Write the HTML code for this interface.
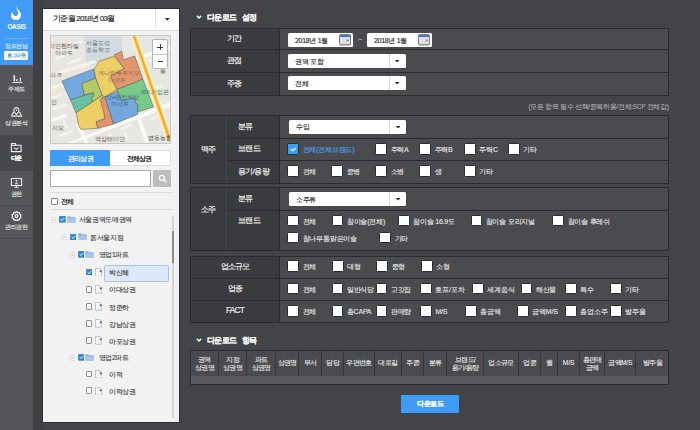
<!DOCTYPE html>
<html><head><meta charset="utf-8">
<style>
*{box-sizing:border-box;margin:0;padding:0}
html,body{width:700px;height:430px;overflow:hidden;background:#434448;font-family:"Liberation Sans",sans-serif}
.a{position:absolute}
.t{position:absolute;white-space:nowrap}
</style></head><body>
<div class="a" style="left:0px;top:0px;width:33px;height:430px;background:#55565a;"></div>
<div class="a" style="left:0px;top:0px;width:33px;height:65.4px;background:#429bf6;"></div>
<div class="a" style="left:33px;top:0px;width:10px;height:430px;background:#404145;"></div>
<svg class="a" style="left:11px;top:6px" width="10" height="14" viewBox="0 0 10 14"><path fill="#fff" d="M5.4 0 C5.6 3 10 5 10 9 C10 12 7.8 14 5 14 C2.2 14 0 12 0 9.5 C0 8 0.7 7 1.5 6.3 C1.8 9 3.5 10.5 5.3 10 C7.2 9.4 7.6 7.3 6.7 5.2 C6 3.7 5.2 2 5.4 0 Z"/></svg>
<div class="t" style="left:0px;top:24px;font-size:6.4px;line-height:6.4px;color:#fff;width:33px;text-align:center;letter-spacing:-0.35px;font-weight:bold">OASIS</div>
<div class="a" style="left:4.6px;top:37.8px;width:23.4px;height:0.9px;background:#74a8dc;"></div>
<div class="t" style="left:0px;top:42.6px;font-size:6.2px;line-height:6.2px;color:#dcedfd;width:33px;text-align:center;letter-spacing:-0.4px;-webkit-text-stroke:0.15px #dcedfd">정도전님</div>
<div class="a" style="left:4.2px;top:50.8px;width:24.3px;height:9px;background:#fff;border-radius:1.5px"></div>
<div class="t" style="left:4.2px;top:52.8px;font-size:5.2px;line-height:5.2px;color:#3a8de0;width:24.3px;text-align:center;letter-spacing:-0.3px;-webkit-text-stroke:0.15px #3a8de0">로그아웃</div>
<div class="a" style="left:0px;top:135.6px;width:33px;height:34.2px;background:#47484c;"></div>
<div class="a" style="left:0px;top:100.4px;width:33px;height:0.8px;background:#4b4c50;"></div>
<div class="a" style="left:0px;top:135.3px;width:33px;height:0.8px;background:#4b4c50;"></div>
<div class="a" style="left:0px;top:169.6px;width:33px;height:0.8px;background:#4b4c50;"></div>
<div class="a" style="left:0px;top:204.6px;width:33px;height:0.8px;background:#4b4c50;"></div>
<div class="a" style="left:0px;top:238.3px;width:33px;height:0.8px;background:#4b4c50;"></div>
<svg class="a" style="left:11.5px;top:75px" width="11" height="8" viewBox="0 0 11 8"><g fill="#eee"><rect x="1.5" y="0.3" width="1.6" height="5.9"/><rect x="4.2" y="4.1" width="1.3" height="2.1"/><rect x="7.7" y="2.8" width="1.3" height="3.4"/><rect x="0.4" y="7" width="10" height="0.9"/></g></svg>
<div class="t" style="left:0px;top:86.3px;font-size:6.2px;line-height:6.2px;color:#e4e4e4;width:33px;text-align:center;letter-spacing:-0.3px;-webkit-text-stroke:0.15px #e4e4e4">주제도</div>
<svg class="a" style="left:6px;top:103px" width="21" height="17" viewBox="0 0 21 17"><g fill="none" stroke="#e6e6e6" stroke-width="1.1" stroke-linejoin="round"><path d="M10.4 11.6 C8.6 9.6 7.8 8.5 7.8 7.2 A2.6 2.6 0 1 1 13 7.2 C13 8.5 12.2 9.6 10.4 11.6 Z"/><path d="M8.2 9.4 L7.3 9.4 L5.6 13.1 L15.6 13.1 L13.8 9.4 L12.7 9.4"/></g><circle cx="10.4" cy="7.1" r="0.8" fill="#e6e6e6"/></svg>
<div class="t" style="left:0px;top:120.3px;font-size:6.2px;line-height:6.2px;color:#e4e4e4;width:33px;text-align:center;letter-spacing:-0.4px;-webkit-text-stroke:0.15px #e4e4e4">상권분석</div>
<svg class="a" style="left:10px;top:142px" width="13" height="11" viewBox="0 0 13 11"><g fill="none" stroke="#f0f0f0" stroke-width="1.1" stroke-linejoin="round"><path d="M1.4 1.5 L5.4 1.5 L6.1 3.3 L11.1 3.3 L11.1 9.6 L1.4 9.6 Z"/><path d="M1.4 3.3 L6.1 3.3"/><path d="M4 5.6 L6.3 7.4 L8.6 5.6"/></g></svg>
<div class="t" style="left:0px;top:155px;font-size:6.4px;line-height:6.4px;color:#fff;width:33px;text-align:center;letter-spacing:-0.2px;font-weight:bold;-webkit-text-stroke:0.15px #fff">다운</div>
<svg class="a" style="left:10px;top:177px" width="13" height="11" viewBox="0 0 13 11"><g fill="none" stroke="#e6e6e6" stroke-width="1.1"><rect x="1.4" y="1.5" width="10.2" height="7"/><path d="M4.6 10.3 L8.4 10.3 M6.5 8.5 L6.5 10.3"/></g><g fill="#e6e6e6"><circle cx="6.5" cy="3.9" r="0.9"/><path d="M4.9 7.3 C5.1 5.3 7.9 5.3 8.1 7.3 Z"/></g></svg>
<div class="t" style="left:0px;top:190.8px;font-size:6.2px;line-height:6.2px;color:#e4e4e4;width:33px;text-align:center;letter-spacing:-0.3px;-webkit-text-stroke:0.15px #e4e4e4">권한</div>
<svg class="a" style="left:11px;top:211px" width="11" height="10" viewBox="0 0 11 10"><g fill="none" stroke="#e8e8e8" stroke-width="1.3" stroke-linejoin="round"><path d="M5.5 0.6 L6.6 1.6 L8.2 1.4 L8.6 3 L10 3.9 L9.4 5.3 L10 6.7 L8.6 7.5 L8.2 9 L6.6 8.8 L5.5 9.6 L4.4 8.8 L2.8 9 L2.4 7.5 L1 6.7 L1.6 5.3 L1 3.9 L2.4 3 L2.8 1.4 L4.4 1.6 Z"/><circle cx="5.5" cy="5.1" r="1.4"/></g></svg>
<div class="t" style="left:0px;top:223.8px;font-size:6.2px;line-height:6.2px;color:#e4e4e4;width:33px;text-align:center;letter-spacing:-0.4px;-webkit-text-stroke:0.15px #e4e4e4">관리권한</div>
<div class="a" style="left:42px;top:8px;width:138px;height:415px;background:#2e2f32;"></div>
<div class="a" style="left:43px;top:9px;width:136px;height:413px;background:#f2f2f2;"></div>
<div class="a" style="left:43px;top:9px;width:136px;height:21px;background:#ffffff;"></div>
<div class="a" style="left:43px;top:30px;width:136px;height:1px;background:#dadada;"></div>
<div class="a" style="left:154.6px;top:9px;width:1px;height:21px;background:#e4e4e4;"></div>
<div class="t" style="left:53px;top:15.3px;font-size:8px;line-height:8px;color:#333;letter-spacing:-0.75px;-webkit-text-stroke:0.2px #333">기준월 2018년 03월</div>
<svg class="a" style="left:165.1px;top:18.4px" width="4.6" height="2.8" viewBox="0 0 4.6 2.8"><path d="M0 0 L4.6 0 L2.3 2.8 Z" fill="#222"/></svg>
<div class="a" style="left:50px;top:35px;width:121px;height:109px;background:#e8e5de;border:1px solid #c9c9c9;overflow:hidden">
<svg class="a" style="left:-1px;top:-1px" width="121" height="109" viewBox="50 35 121 109">
<rect x="40" y="30" width="140" height="120" fill="#e8e6e0"/>
<g fill="#f4f3ef">
<path d="M51 97 L62 93 L63 95.5 L52 99.5 Z"/><path d="M52 108 L66 103 L67 105.5 L53 110.5 Z"/>
<path d="M58 135 L72 130 L73 132.5 L59 137.5 Z"/><path d="M64 118 L68 128 L66 129 L62 119 Z"/>
<path d="M54 58 L70 52 L71 54.5 L55 60.5 Z"/><path d="M66 63 L80 58 L81 60 L67 65 Z"/>
<path d="M72 44 L82 40 L83 42.5 L73 46.5 Z"/><path d="M120 128 L132 123 L133 125.5 L121 130.5 Z"/>
<path d="M110 132 L113 139 L111 140 L108 133 Z"/><path d="M125 131 L129 140 L127 141 L123 132 Z"/>
<path d="M150 118 L160 114 L161 116.5 L151 120.5 Z"/><path d="M148 60 L160 55 L161 57.5 L149 62.5 Z"/>
<path d="M152 88 L162 84 L163 86.5 L153 90.5 Z"/>
</g>

<path d="M84 33 L122 33 L122 56 L99 61.5 L92 66 L86 62 Z" fill="#d3dbe2"/>
<path d="M48 88 L170 45 L170 49 L48 92 Z" fill="#fbfaf6"/>
<path d="M48 90 L62 85 L63 88 L48 93 Z" fill="#f4eebd"/><path d="M50 74 L95 60 L96 63 L51 77 Z" fill="#f6f4ee"/>
<path d="M60 146 L175 100 L175 105 L66 146 Z" fill="#fbfaf6"/>
<path d="M48 120 L66 114 L67 117 L48 123 Z" fill="#fbfaf6"/>
<path d="M138 108 L150 146 L146 146 L134 109 Z" fill="#fbfaf6"/>
<path d="M80 124 L90 146 L86 146 L76 124 Z" fill="#fbfaf6"/>
<path d="M129.5 33 L136.5 33 L173 138 L166.5 141 Z" fill="#fbf3cf"/><path d="M130.8 33 L135.2 33 L171.6 138.5 L167.8 140 Z" fill="#f7d26a"/>
<path d="M132.3 33 L133.8 33 L170.5 139 L169 139.5 Z" fill="#f0a030"/>
<path d="M61.8 81.1 L93.7 68.9 L99 61.3 L114.4 54.8 L121.8 51.2 L123.4 59.7 L134.8 56.1 L142.9 79.2 L153.5 106.9 L138 111.8 L137.9 114.3 L113.5 124 L98.1 128.2 L81 129.5 L78.6 125 L76.1 112.8 L70.4 99.8 Z" fill="#d9c98a"/>
<g stroke="#5a5a5a" stroke-width="0.5" stroke-linejoin="round" fill-opacity="0.85">
<path d="M61.8 81.1 L93.7 68.9 L95.7 77.9 L81.8 83.6 L84.3 95 L94 93.3 L70.4 99.8 Z" fill="#62a2ea"/>
<path d="M70.4 99.8 L93.2 92.5 L94 95.8 L91.1 98.2 L92.4 102 L76.1 112.8 Z" fill="#55c0a8"/>
<path d="M81.8 83.6 L95.7 78.2 L102.2 95 L93.2 101.5 L91.1 98.2 L94 95.8 L93.2 92.5 L84.3 95 Z" fill="#a8cb62"/>
<path d="M76.1 112.8 L92.4 102 L102.2 95.3 L105.1 118.5 L96 122 L98.1 128.2 L81 129.5 L78.6 125 Z" fill="#f1d060"/>
<path d="M94.1 69.4 L99 61.3 L114.4 56.4 L124.2 68.6 L110.4 76 L116.9 89.5 L104.8 96.9 L102.2 95 L95.7 77.9 Z" fill="#f1d060"/>
<path d="M114.4 54.8 L121.8 51.2 L123.4 59.7 L134.8 56.1 L142.9 79.2 L116.9 89.5 L110.4 76 L124.2 68.6 Z" fill="#e58c68"/>
<path d="M100.2 99 L104.8 96.9 L113.5 124 L98.1 128.2 L96 122 L105.1 118.5 Z" fill="#e58c68"/>
<path d="M104.8 96.9 L117.7 91.3 L121.8 101 L134.4 97.6 L135.8 103.1 L137.9 104.5 L137.9 114.3 L113.5 124 Z" fill="#62a2ea"/>
<path d="M116.9 89.5 L142.9 79.2 L153.5 106.9 L138 111.8 L137.9 104.5 L135.8 103.1 L134.4 97.6 L121.8 101 L117.7 91.3 Z" fill="#66c98a"/>
</g>
<g font-size="6" fill="#6a625c" font-family="Liberation Sans, sans-serif">
<text x="49" y="48.3">미인헨타빌</text><text x="55.3" y="54.9">아파트</text>
<text x="85.7" y="45" fill="#5a6e84" font-size="6.3">서울도성</text><text x="85.7" y="51.6" fill="#5a6e84" font-size="6.3">초등학교</text>
<text x="50" y="76.7">파크</text><text x="51" y="104">안</text><text x="52" y="130">지오</text>
<text x="98" y="75" fill="#8a6a50">개나리푸르지오</text><text x="108" y="82" fill="#8a6a50">아파트</text>
<text x="106" y="99" fill="#44608a">상e편한세상</text><text x="111" y="106" fill="#44608a">아파트</text>
<text x="141" y="94.2" fill="#447a55">IBK기업은행</text>
<text x="95" y="141">역삼래미안</text><text x="147.6" y="140.3" fill="#333">영동농협</text>
<text x="160" y="73">통</text>
</g>
</svg>
<div class="a" style="left:101.1px;top:3.3px;width:16px;height:29.6px;background:#fff;border:1px solid #b4b4b4;border-radius:2px"></div>
<div class="a" style="left:102px;top:17.6px;width:14.2px;height:1.1px;background:#c4c4c4"></div>
<div class="a" style="left:106.3px;top:10.5px;width:6px;height:1.3px;background:#3a3a3a"></div>
<div class="a" style="left:108.65px;top:8.15px;width:1.3px;height:6px;background:#3a3a3a"></div>
<div class="a" style="left:106.6px;top:24.5px;width:5.4px;height:1.2px;background:#3a3a3a"></div>
</div>
<div class="a" style="left:50px;top:150.4px;width:60px;height:15.6px;background:#3f9bf4;"></div>
<div class="a" style="left:110px;top:150.4px;width:61px;height:15.6px;background:#fff;border:1px solid #dedede;border-left:none"></div>
<div class="t" style="left:50.5px;top:154.5px;font-size:7.3px;line-height:7.3px;color:#fff;width:60px;text-align:center;letter-spacing:-0.9px;-webkit-text-stroke:0.2px #fff">관리상권</div>
<div class="t" style="left:108.8px;top:154.5px;font-size:7.3px;line-height:7.3px;color:#222;width:61px;text-align:center;letter-spacing:-1px;-webkit-text-stroke:0.25px #222">전체상권</div>
<div class="a" style="left:50px;top:170.4px;width:100.5px;height:16.2px;background:#fff;border:1px solid #a9a9a9"></div>
<div class="a" style="left:153px;top:170.4px;width:18px;height:16.2px;background:#bdbdbd;"></div>
<svg class="a" style="left:157.8px;top:174.3px" width="9" height="9" viewBox="0 0 9 9"><circle cx="3.8" cy="3.8" r="2.5" fill="none" stroke="#fff" stroke-width="1.3"/><path d="M5.6 5.6 L8 8" stroke="#fff" stroke-width="1.6"/></svg>
<div class="a" style="left:50px;top:192px;width:121.5px;height:1px;background:#dcdcdc;"></div>
<div class="a" style="left:51.1px;top:198px;width:6.8px;height:6.9px;background:#fff;border:0.9px solid #8a8a8a;border-radius:1px"></div>
<div class="t" style="left:61.2px;top:197.6px;font-size:7.2px;line-height:7.2px;color:#222;letter-spacing:-0.7px;-webkit-text-stroke:0.2px #222">전체</div>
<div class="a" style="left:50px;top:209px;width:121.5px;height:1px;background:#dcdcdc;"></div>
<div class="a" style="left:172px;top:215.5px;width:1.8px;height:202px;background:#d4d4d4;"></div>
<div class="a" style="left:172px;top:230.8px;width:1.8px;height:32px;background:#8c8c8c;"></div>
<div class="a" style="left:104.4px;top:264.5px;width:64.4px;height:17px;background:#dde9f8;border:1px solid #a3c4ea;border-radius:1.5px"></div>
<svg class="a" style="left:51px;top:216.5px" width="5.2" height="6" viewBox="0 0 5.2 6"><rect x="0.35" y="0.35" width="4.5" height="5.3" rx="1" fill="#f8f8f8" stroke="#cdcdcd" stroke-width="0.7"/><path d="M1.5 3 L3.7 3" stroke="#a0a0a0" stroke-width="0.7"/></svg>
<svg class="a" style="left:59px;top:216.0px" width="6.6" height="6.6" viewBox="0 0 7 7"><rect x="0.3" y="0.3" width="6.4" height="6.4" rx="0.5" fill="#2f8ae6" stroke="#3a5f8e" stroke-width="0.6"/><path d="M1.8 3.6 L3.1 4.7 L5.3 2.4" fill="none" stroke="#fff" stroke-width="1"/></svg>
<svg class="a" style="left:67px;top:215.9px" width="9" height="7" viewBox="0 0 9 7"><path d="M0.2 1.2 Q0.2 0.3 1 0.3 L3 0.3 Q3.6 0.3 3.9 0.9 L4.2 1.3 L8 1.3 Q8.8 1.3 8.8 2.1 L8.8 6 Q8.8 6.8 8 6.8 L1 6.8 Q0.2 6.8 0.2 6 Z" fill="#8db4e4"/><path d="M0.2 2.6 L8.8 2.6 L8.8 6 Q8.8 6.8 8 6.8 L1 6.8 Q0.2 6.8 0.2 6 Z" fill="#a9c7ec"/></svg>
<div class="t" style="left:78.5px;top:216.0px;font-size:7px;line-height:7px;color:#3a3a3a;letter-spacing:-0.3px;-webkit-text-stroke:0.12px #3a3a3a">서울권역도매권역</div>
<svg class="a" style="left:61.5px;top:234px" width="5.2" height="6" viewBox="0 0 5.2 6"><rect x="0.35" y="0.35" width="4.5" height="5.3" rx="1" fill="#f8f8f8" stroke="#cdcdcd" stroke-width="0.7"/><path d="M1.5 3 L3.7 3" stroke="#a0a0a0" stroke-width="0.7"/></svg>
<svg class="a" style="left:69.5px;top:233.5px" width="6.6" height="6.6" viewBox="0 0 7 7"><rect x="0.3" y="0.3" width="6.4" height="6.4" rx="0.5" fill="#2f8ae6" stroke="#3a5f8e" stroke-width="0.6"/><path d="M1.8 3.6 L3.1 4.7 L5.3 2.4" fill="none" stroke="#fff" stroke-width="1"/></svg>
<svg class="a" style="left:77.5px;top:233.4px" width="9" height="7" viewBox="0 0 9 7"><path d="M0.2 1.2 Q0.2 0.3 1 0.3 L3 0.3 Q3.6 0.3 3.9 0.9 L4.2 1.3 L8 1.3 Q8.8 1.3 8.8 2.1 L8.8 6 Q8.8 6.8 8 6.8 L1 6.8 Q0.2 6.8 0.2 6 Z" fill="#8db4e4"/><path d="M0.2 2.6 L8.8 2.6 L8.8 6 Q8.8 6.8 8 6.8 L1 6.8 Q0.2 6.8 0.2 6 Z" fill="#a9c7ec"/></svg>
<div class="t" style="left:90px;top:233.5px;font-size:7px;line-height:7px;color:#3a3a3a;letter-spacing:-0.3px;-webkit-text-stroke:0.12px #3a3a3a">동서울지점</div>
<svg class="a" style="left:69.5px;top:251.5px" width="5.2" height="6" viewBox="0 0 5.2 6"><rect x="0.35" y="0.35" width="4.5" height="5.3" rx="1" fill="#f8f8f8" stroke="#cdcdcd" stroke-width="0.7"/><path d="M1.5 3 L3.7 3" stroke="#a0a0a0" stroke-width="0.7"/></svg>
<svg class="a" style="left:77.5px;top:251.0px" width="6.6" height="6.6" viewBox="0 0 7 7"><rect x="0.3" y="0.3" width="6.4" height="6.4" rx="0.5" fill="#2f8ae6" stroke="#3a5f8e" stroke-width="0.6"/><path d="M1.8 3.6 L3.1 4.7 L5.3 2.4" fill="none" stroke="#fff" stroke-width="1"/></svg>
<svg class="a" style="left:85px;top:250.9px" width="9" height="7" viewBox="0 0 9 7"><path d="M0.2 1.2 Q0.2 0.3 1 0.3 L3 0.3 Q3.6 0.3 3.9 0.9 L4.2 1.3 L8 1.3 Q8.8 1.3 8.8 2.1 L8.8 6 Q8.8 6.8 8 6.8 L1 6.8 Q0.2 6.8 0.2 6 Z" fill="#8db4e4"/><path d="M0.2 2.6 L8.8 2.6 L8.8 6 Q8.8 6.8 8 6.8 L1 6.8 Q0.2 6.8 0.2 6 Z" fill="#a9c7ec"/></svg>
<div class="t" style="left:98.5px;top:251.0px;font-size:7px;line-height:7px;color:#3a3a3a;letter-spacing:-0.3px;-webkit-text-stroke:0.12px #3a3a3a">영업1파트</div>
<svg class="a" style="left:85.5px;top:268.8px" width="6.6" height="6.6" viewBox="0 0 7 7"><rect x="0.3" y="0.3" width="6.4" height="6.4" rx="0.5" fill="#2f8ae6" stroke="#3a5f8e" stroke-width="0.6"/><path d="M1.8 3.6 L3.1 4.7 L5.3 2.4" fill="none" stroke="#fff" stroke-width="1"/></svg>
<svg class="a" style="left:94.9px;top:267.5px" width="7.2" height="8.6" viewBox="0 0 7.2 8.6"><path d="M0.4 0.4 L4.6 0.4 L6.8 2.4 L6.8 8.2 L0.4 8.2 Z" fill="#f6f6f6" stroke="#a8a8a8" stroke-width="0.7"/><path d="M4.1 2.7 L6.9 2.4 L6.2 4.7 Z" fill="#4a4a4a"/></svg>
<div class="t" style="left:109px;top:268.8px;font-size:7px;line-height:7px;color:#3a3a3a;letter-spacing:-0.3px;-webkit-text-stroke:0.12px #3a3a3a">박신혜</div>
<div class="a" style="left:85.5px;top:285.8px;width:6.8px;height:6.8px;background:#fff;border:0.8px solid #8e8e8e;border-radius:1px"></div>
<svg class="a" style="left:94.9px;top:285.0px" width="7.2" height="8.6" viewBox="0 0 7.2 8.6"><path d="M0.4 0.4 L4.6 0.4 L6.8 2.4 L6.8 8.2 L0.4 8.2 Z" fill="#f6f6f6" stroke="#a8a8a8" stroke-width="0.7"/><path d="M4.1 2.7 L6.9 2.4 L6.2 4.7 Z" fill="#4a4a4a"/></svg>
<div class="t" style="left:109px;top:286.3px;font-size:7px;line-height:7px;color:#3a3a3a;letter-spacing:-0.3px;-webkit-text-stroke:0.12px #3a3a3a">이대상권</div>
<div class="a" style="left:85.5px;top:303px;width:6.8px;height:6.8px;background:#fff;border:0.8px solid #8e8e8e;border-radius:1px"></div>
<svg class="a" style="left:94.9px;top:302.2px" width="7.2" height="8.6" viewBox="0 0 7.2 8.6"><path d="M0.4 0.4 L4.6 0.4 L6.8 2.4 L6.8 8.2 L0.4 8.2 Z" fill="#f6f6f6" stroke="#a8a8a8" stroke-width="0.7"/><path d="M4.1 2.7 L6.9 2.4 L6.2 4.7 Z" fill="#4a4a4a"/></svg>
<div class="t" style="left:109px;top:303.5px;font-size:7px;line-height:7px;color:#3a3a3a;letter-spacing:-0.3px;-webkit-text-stroke:0.12px #3a3a3a">정준하</div>
<div class="a" style="left:85.5px;top:320.2px;width:6.8px;height:6.8px;background:#fff;border:0.8px solid #8e8e8e;border-radius:1px"></div>
<svg class="a" style="left:94.9px;top:319.4px" width="7.2" height="8.6" viewBox="0 0 7.2 8.6"><path d="M0.4 0.4 L4.6 0.4 L6.8 2.4 L6.8 8.2 L0.4 8.2 Z" fill="#f6f6f6" stroke="#a8a8a8" stroke-width="0.7"/><path d="M4.1 2.7 L6.9 2.4 L6.2 4.7 Z" fill="#4a4a4a"/></svg>
<div class="t" style="left:109px;top:320.7px;font-size:7px;line-height:7px;color:#3a3a3a;letter-spacing:-0.3px;-webkit-text-stroke:0.12px #3a3a3a">강남상권</div>
<div class="a" style="left:85.5px;top:337.2px;width:6.8px;height:6.8px;background:#fff;border:0.8px solid #8e8e8e;border-radius:1px"></div>
<svg class="a" style="left:94.9px;top:336.4px" width="7.2" height="8.6" viewBox="0 0 7.2 8.6"><path d="M0.4 0.4 L4.6 0.4 L6.8 2.4 L6.8 8.2 L0.4 8.2 Z" fill="#f6f6f6" stroke="#a8a8a8" stroke-width="0.7"/><path d="M4.1 2.7 L6.9 2.4 L6.2 4.7 Z" fill="#4a4a4a"/></svg>
<div class="t" style="left:109px;top:337.7px;font-size:7px;line-height:7px;color:#3a3a3a;letter-spacing:-0.3px;-webkit-text-stroke:0.12px #3a3a3a">마포상권</div>
<svg class="a" style="left:69.5px;top:354.8px" width="5.2" height="6" viewBox="0 0 5.2 6"><rect x="0.35" y="0.35" width="4.5" height="5.3" rx="1" fill="#f8f8f8" stroke="#cdcdcd" stroke-width="0.7"/><path d="M1.5 3 L3.7 3" stroke="#a0a0a0" stroke-width="0.7"/></svg>
<svg class="a" style="left:77.5px;top:354.3px" width="6.6" height="6.6" viewBox="0 0 7 7"><rect x="0.3" y="0.3" width="6.4" height="6.4" rx="0.5" fill="#2f8ae6" stroke="#3a5f8e" stroke-width="0.6"/><path d="M1.8 3.6 L3.1 4.7 L5.3 2.4" fill="none" stroke="#fff" stroke-width="1"/></svg>
<svg class="a" style="left:85px;top:354.2px" width="9" height="7" viewBox="0 0 9 7"><path d="M0.2 1.2 Q0.2 0.3 1 0.3 L3 0.3 Q3.6 0.3 3.9 0.9 L4.2 1.3 L8 1.3 Q8.8 1.3 8.8 2.1 L8.8 6 Q8.8 6.8 8 6.8 L1 6.8 Q0.2 6.8 0.2 6 Z" fill="#8db4e4"/><path d="M0.2 2.6 L8.8 2.6 L8.8 6 Q8.8 6.8 8 6.8 L1 6.8 Q0.2 6.8 0.2 6 Z" fill="#a9c7ec"/></svg>
<div class="t" style="left:98.5px;top:354.3px;font-size:7px;line-height:7px;color:#3a3a3a;letter-spacing:-0.3px;-webkit-text-stroke:0.12px #3a3a3a">영업2파트</div>
<div class="a" style="left:85.5px;top:370.6px;width:6.8px;height:6.8px;background:#fff;border:0.8px solid #8e8e8e;border-radius:1px"></div>
<svg class="a" style="left:94.9px;top:369.8px" width="7.2" height="8.6" viewBox="0 0 7.2 8.6"><path d="M0.4 0.4 L4.6 0.4 L6.8 2.4 L6.8 8.2 L0.4 8.2 Z" fill="#f6f6f6" stroke="#a8a8a8" stroke-width="0.7"/><path d="M4.1 2.7 L6.9 2.4 L6.2 4.7 Z" fill="#4a4a4a"/></svg>
<div class="t" style="left:109px;top:371.1px;font-size:7px;line-height:7px;color:#3a3a3a;letter-spacing:-0.3px;-webkit-text-stroke:0.12px #3a3a3a">이적</div>
<div class="a" style="left:85.5px;top:387.4px;width:6.8px;height:6.8px;background:#fff;border:0.8px solid #8e8e8e;border-radius:1px"></div>
<svg class="a" style="left:94.9px;top:386.59999999999997px" width="7.2" height="8.6" viewBox="0 0 7.2 8.6"><path d="M0.4 0.4 L4.6 0.4 L6.8 2.4 L6.8 8.2 L0.4 8.2 Z" fill="#f6f6f6" stroke="#a8a8a8" stroke-width="0.7"/><path d="M4.1 2.7 L6.9 2.4 L6.2 4.7 Z" fill="#4a4a4a"/></svg>
<div class="t" style="left:109px;top:387.9px;font-size:7px;line-height:7px;color:#3a3a3a;letter-spacing:-0.3px;-webkit-text-stroke:0.12px #3a3a3a">이적상권</div>
<svg class="a" style="left:195.8px;top:15px" width="6" height="4" viewBox="0 0 6 4"><path d="M0.8 0.9 L3 2.9 L5.2 0.9" fill="none" stroke="#eee" stroke-width="1.5"/></svg>
<div class="t" style="left:206.5px;top:13.1px;font-size:8.4px;line-height:8.4px;color:#eeeeee;letter-spacing:-0.5px;font-weight:bold;-webkit-text-stroke:0.25px #eee">다운로드</div>
<div class="t" style="left:241.8px;top:13.1px;font-size:8.4px;line-height:8.4px;color:#eeeeee;letter-spacing:-0.5px;font-weight:bold;-webkit-text-stroke:0.25px #eee">설정</div>
<div class="a" style="left:190px;top:28px;width:479px;height:68px;background:#2a2b2e;"></div>
<div class="a" style="left:191px;top:29px;width:477px;height:66px;background:#4a4b4f;"></div>
<div class="a" style="left:191px;top:29px;width:88px;height:66px;background:#3a3b3f;"></div>
<div class="a" style="left:279px;top:29px;width:1px;height:66px;background:#2a2b2e;"></div>
<div class="a" style="left:191px;top:49px;width:477px;height:1px;background:#2a2b2e;"></div>
<div class="a" style="left:191px;top:72px;width:477px;height:1px;background:#2a2b2e;"></div>
<div class="t" style="left:190px;top:34.8px;font-size:8px;line-height:8px;color:#eaeaea;width:88px;text-align:center;letter-spacing:-1px;-webkit-text-stroke:0.2px #eaeaea">기간</div>
<div class="t" style="left:190px;top:56.8px;font-size:8px;line-height:8px;color:#eaeaea;width:88px;text-align:center;letter-spacing:-1px;-webkit-text-stroke:0.2px #eaeaea">관점</div>
<div class="t" style="left:190px;top:79.8px;font-size:8px;line-height:8px;color:#eaeaea;width:88px;text-align:center;letter-spacing:-1px;-webkit-text-stroke:0.2px #eaeaea">주종</div>
<div class="a" style="left:288px;top:33px;width:65.2px;height:14px;background:#fff;border-radius:1.5px"></div>
<div class="t" style="left:295px;top:37.2px;font-size:7px;line-height:7px;color:#2a2a2a;letter-spacing:-0.3px;-webkit-text-stroke:0.15px #2a2a2a">2018년 1월</div>
<svg class="a" style="left:339.2px;top:34.4px" width="12" height="11.5" viewBox="0 0 12 11.5"><rect x="0.6" y="0.6" width="10.8" height="10.3" rx="1.3" fill="#eef0f3" stroke="#7c7f86" stroke-width="1.1"/><rect x="1.1" y="1.1" width="9.8" height="2" fill="#3f74c6"/><path d="M1.5 5.3 H10.5 M1.5 7.5 H10.5 M1.5 9.5 H10.5 M4.2 3.2 V10.5 M7.3 3.2 V10.5" stroke="#c2c6cc" stroke-width="0.5"/><rect x="7.6" y="5.6" width="2.2" height="1.7" fill="#8a8d92"/></svg>
<svg class="a" style="left:358.3px;top:37.6px" width="4.5" height="3" viewBox="0 0 4.5 3"><path d="M0.4 2 Q1.2 0.8 2.2 1.5 Q3.2 2.2 4.1 1" fill="none" stroke="#cfcfcf" stroke-width="0.8"/></svg>
<div class="a" style="left:367px;top:33px;width:65px;height:14px;background:#fff;border-radius:1.5px"></div>
<div class="t" style="left:374px;top:37.2px;font-size:7px;line-height:7px;color:#2a2a2a;letter-spacing:-0.3px;-webkit-text-stroke:0.15px #2a2a2a">2018년 1월</div>
<svg class="a" style="left:418px;top:34.4px" width="12" height="11.5" viewBox="0 0 12 11.5"><rect x="0.6" y="0.6" width="10.8" height="10.3" rx="1.3" fill="#eef0f3" stroke="#7c7f86" stroke-width="1.1"/><rect x="1.1" y="1.1" width="9.8" height="2" fill="#3f74c6"/><path d="M1.5 5.3 H10.5 M1.5 7.5 H10.5 M1.5 9.5 H10.5 M4.2 3.2 V10.5 M7.3 3.2 V10.5" stroke="#c2c6cc" stroke-width="0.5"/><rect x="7.6" y="5.6" width="2.2" height="1.7" fill="#8a8d92"/></svg>
<div class="a" style="left:288px;top:54.1px;width:117.6px;height:14.4px;background:#fff;border-radius:1.5px"></div>
<div class="a" style="left:388.6px;top:54.1px;width:0.8px;height:14.4px;background:#d8d8d8;"></div>
<div class="t" style="left:295px;top:57.800000000000004px;font-size:7px;line-height:7px;color:#2a2a2a;letter-spacing:-0.3px;-webkit-text-stroke:0.15px #2a2a2a">권역 포함</div>
<svg class="a" style="left:395.1px;top:60.300000000000004px" width="4.2" height="2.6" viewBox="0 0 4.2 2.6"><path d="M0 0 L4.2 0 L2.1 2.6 Z" fill="#222"/></svg>
<div class="a" style="left:288px;top:76px;width:117.6px;height:14.4px;background:#fff;border-radius:1.5px"></div>
<div class="a" style="left:388.6px;top:76px;width:0.8px;height:14.4px;background:#d8d8d8;"></div>
<div class="t" style="left:295px;top:79.7px;font-size:7px;line-height:7px;color:#2a2a2a;letter-spacing:-0.3px;-webkit-text-stroke:0.15px #2a2a2a">전체</div>
<svg class="a" style="left:395.1px;top:82.2px" width="4.2" height="2.6" viewBox="0 0 4.2 2.6"><path d="M0 0 L4.2 0 L2.1 2.6 Z" fill="#222"/></svg>
<div class="t" style="left:480px;top:104px;font-size:6.5px;line-height:6.5px;color:#ababab;width:188.5px;text-align:right;letter-spacing:-0.32px;-webkit-text-stroke:0.1px #ababab">(모든 항목 필수 선택/중복허용/전체:SCP 전체값)</div>
<div class="a" style="left:190px;top:115px;width:479px;height:68.5px;background:#2a2b2e;"></div>
<div class="a" style="left:191px;top:116px;width:477px;height:66.5px;background:#4a4b4f;"></div>
<div class="a" style="left:191px;top:116px;width:88px;height:66.5px;background:#3a3b3f;"></div>
<div class="a" style="left:279px;top:116px;width:1px;height:66.5px;background:#2a2b2e;"></div>
<div class="a" style="left:226px;top:116px;width:1px;height:66.5px;background:#47484c;"></div>
<div class="a" style="left:227.5px;top:137.5px;width:440.5px;height:1px;background:#2a2b2e;"></div>
<div class="a" style="left:227.5px;top:160.3px;width:440.5px;height:1px;background:#2a2b2e;"></div>
<div class="t" style="left:190.2px;top:145.5px;font-size:8px;line-height:8px;color:#eaeaea;width:36px;text-align:center;letter-spacing:-0.5px;-webkit-text-stroke:0.2px #eaeaea">맥주</div>
<div class="t" style="left:237.5px;top:122.8px;font-size:8px;line-height:8px;color:#eaeaea;letter-spacing:-0.5px;-webkit-text-stroke:0.2px #eaeaea">분류</div>
<div class="t" style="left:237.5px;top:145.3px;font-size:8px;line-height:8px;color:#eaeaea;letter-spacing:-0.5px;-webkit-text-stroke:0.2px #eaeaea">브랜드</div>
<div class="t" style="left:237.5px;top:167.8px;font-size:8px;line-height:8px;color:#eaeaea;letter-spacing:-0.5px;-webkit-text-stroke:0.2px #eaeaea">용기/용량</div>
<div class="a" style="left:289px;top:119.6px;width:117px;height:14.4px;background:#fff;border-radius:1.5px"></div>
<div class="a" style="left:389px;top:119.6px;width:0.8px;height:14.4px;background:#d8d8d8;"></div>
<div class="t" style="left:296px;top:123.3px;font-size:7px;line-height:7px;color:#2a2a2a;letter-spacing:-0.3px;-webkit-text-stroke:0.15px #2a2a2a">수입</div>
<svg class="a" style="left:395.5px;top:125.8px" width="4.2" height="2.6" viewBox="0 0 4.2 2.6"><path d="M0 0 L4.2 0 L2.1 2.6 Z" fill="#222"/></svg>
<div class="a" style="left:287.3px;top:143.0px;width:11.8px;height:11.6px;background:#3e9cf5;border:1px solid #2a2b2e;border-radius:1.5px"></div>
<svg class="a" style="left:288px;top:143.6px" width="11" height="11" viewBox="0 0 11 11"><path d="M3.2 5.6 L4.7 6.7 L7.6 4.3" fill="none" stroke="#fff" stroke-width="1.2" stroke-linecap="round"/></svg>
<div class="t" style="left:302.5px;top:145.9px;font-size:7px;line-height:7px;color:#4aa0ef;letter-spacing:-0.2px;-webkit-text-stroke:0.15px #4aa0ef">전체(전체브랜드)</div>
<div class="a" style="left:375.3px;top:143.0px;width:11.8px;height:11.6px;background:#fff;border:1px solid #2a2b2e;border-radius:1.5px"></div>
<div class="t" style="left:390.5px;top:145.9px;font-size:7px;line-height:7px;color:#e4e4e4;letter-spacing:-0.2px;-webkit-text-stroke:0.15px #e4e4e4">주력A</div>
<div class="a" style="left:419.3px;top:143.0px;width:11.8px;height:11.6px;background:#fff;border:1px solid #2a2b2e;border-radius:1.5px"></div>
<div class="t" style="left:434.5px;top:145.9px;font-size:7px;line-height:7px;color:#e4e4e4;letter-spacing:-0.2px;-webkit-text-stroke:0.15px #e4e4e4">주력B</div>
<div class="a" style="left:464.1px;top:143.0px;width:11.8px;height:11.6px;background:#fff;border:1px solid #2a2b2e;border-radius:1.5px"></div>
<div class="t" style="left:479.3px;top:145.9px;font-size:7px;line-height:7px;color:#e4e4e4;letter-spacing:-0.2px;-webkit-text-stroke:0.15px #e4e4e4">주력C</div>
<div class="a" style="left:508.1px;top:143.0px;width:11.8px;height:11.6px;background:#fff;border:1px solid #2a2b2e;border-radius:1.5px"></div>
<div class="t" style="left:523.3px;top:145.9px;font-size:7px;line-height:7px;color:#e4e4e4;letter-spacing:-0.2px;-webkit-text-stroke:0.15px #e4e4e4">기타</div>
<div class="a" style="left:287.3px;top:165.4px;width:11.8px;height:11.6px;background:#fff;border:1px solid #2a2b2e;border-radius:1.5px"></div>
<div class="t" style="left:302.5px;top:168.3px;font-size:7px;line-height:7px;color:#e4e4e4;letter-spacing:-0.2px;-webkit-text-stroke:0.15px #e4e4e4">전체</div>
<div class="a" style="left:331.3px;top:165.4px;width:11.8px;height:11.6px;background:#fff;border:1px solid #2a2b2e;border-radius:1.5px"></div>
<div class="t" style="left:346.5px;top:168.3px;font-size:7px;line-height:7px;color:#e4e4e4;letter-spacing:-0.2px;-webkit-text-stroke:0.15px #e4e4e4">중병</div>
<div class="a" style="left:375.3px;top:165.4px;width:11.8px;height:11.6px;background:#fff;border:1px solid #2a2b2e;border-radius:1.5px"></div>
<div class="t" style="left:390.5px;top:168.3px;font-size:7px;line-height:7px;color:#e4e4e4;letter-spacing:-0.2px;-webkit-text-stroke:0.15px #e4e4e4">소병</div>
<div class="a" style="left:419.3px;top:165.4px;width:11.8px;height:11.6px;background:#fff;border:1px solid #2a2b2e;border-radius:1.5px"></div>
<div class="t" style="left:434.5px;top:168.3px;font-size:7px;line-height:7px;color:#e4e4e4;letter-spacing:-0.2px;-webkit-text-stroke:0.15px #e4e4e4">생</div>
<div class="a" style="left:464.1px;top:165.4px;width:11.8px;height:11.6px;background:#fff;border:1px solid #2a2b2e;border-radius:1.5px"></div>
<div class="t" style="left:479.3px;top:168.3px;font-size:7px;line-height:7px;color:#e4e4e4;letter-spacing:-0.2px;-webkit-text-stroke:0.15px #e4e4e4">기타</div>
<div class="a" style="left:190px;top:187px;width:479px;height:64px;background:#2a2b2e;"></div>
<div class="a" style="left:191px;top:188px;width:477px;height:62px;background:#4a4b4f;"></div>
<div class="a" style="left:191px;top:188px;width:88px;height:62px;background:#3a3b3f;"></div>
<div class="a" style="left:279px;top:188px;width:1px;height:62px;background:#2a2b2e;"></div>
<div class="a" style="left:226px;top:188px;width:1px;height:62px;background:#47484c;"></div>
<div class="a" style="left:227.5px;top:209.5px;width:440.5px;height:1px;background:#2a2b2e;"></div>
<div class="t" style="left:190.2px;top:206.3px;font-size:8px;line-height:8px;color:#eaeaea;width:36px;text-align:center;letter-spacing:-0.5px;-webkit-text-stroke:0.2px #eaeaea">소주</div>
<div class="t" style="left:237.5px;top:194.8px;font-size:8px;line-height:8px;color:#eaeaea;letter-spacing:-0.5px;-webkit-text-stroke:0.2px #eaeaea">분류</div>
<div class="t" style="left:237.5px;top:216.8px;font-size:8px;line-height:8px;color:#eaeaea;letter-spacing:-0.5px;-webkit-text-stroke:0.2px #eaeaea">브랜드</div>
<div class="a" style="left:289px;top:192px;width:117px;height:14.4px;background:#fff;border-radius:1.5px"></div>
<div class="a" style="left:389px;top:192px;width:0.8px;height:14.4px;background:#d8d8d8;"></div>
<div class="t" style="left:296px;top:195.7px;font-size:7px;line-height:7px;color:#2a2a2a;letter-spacing:-0.3px;-webkit-text-stroke:0.15px #2a2a2a">소주류</div>
<svg class="a" style="left:395.5px;top:198.2px" width="4.2" height="2.6" viewBox="0 0 4.2 2.6"><path d="M0 0 L4.2 0 L2.1 2.6 Z" fill="#222"/></svg>
<div class="a" style="left:287.3px;top:214.8px;width:11.8px;height:11.6px;background:#fff;border:1px solid #2a2b2e;border-radius:1.5px"></div>
<div class="t" style="left:302.5px;top:217.70000000000002px;font-size:7px;line-height:7px;color:#e4e4e4;letter-spacing:-0.2px;-webkit-text-stroke:0.15px #e4e4e4">전체</div>
<div class="a" style="left:331.6px;top:214.8px;width:11.8px;height:11.6px;background:#fff;border:1px solid #2a2b2e;border-radius:1.5px"></div>
<div class="t" style="left:346.8px;top:217.70000000000002px;font-size:7px;line-height:7px;color:#e4e4e4;letter-spacing:-0.2px;-webkit-text-stroke:0.15px #e4e4e4">참이슬(전체)</div>
<div class="a" style="left:397.90000000000003px;top:214.8px;width:11.8px;height:11.6px;background:#fff;border:1px solid #2a2b2e;border-radius:1.5px"></div>
<div class="t" style="left:413.1px;top:217.70000000000002px;font-size:7px;line-height:7px;color:#e4e4e4;letter-spacing:-0.2px;-webkit-text-stroke:0.15px #e4e4e4">참이슬 16.9도</div>
<div class="a" style="left:470.5px;top:214.8px;width:11.8px;height:11.6px;background:#fff;border:1px solid #2a2b2e;border-radius:1.5px"></div>
<div class="t" style="left:485.7px;top:217.70000000000002px;font-size:7px;line-height:7px;color:#e4e4e4;letter-spacing:-0.2px;-webkit-text-stroke:0.15px #e4e4e4">참이슬 오리지널</div>
<div class="a" style="left:552.3px;top:214.8px;width:11.8px;height:11.6px;background:#fff;border:1px solid #2a2b2e;border-radius:1.5px"></div>
<div class="t" style="left:567.5px;top:217.70000000000002px;font-size:7px;line-height:7px;color:#e4e4e4;letter-spacing:-0.2px;-webkit-text-stroke:0.15px #e4e4e4">참이슬 후레쉬</div>
<div class="a" style="left:287.3px;top:231.8px;width:11.8px;height:11.6px;background:#fff;border:1px solid #2a2b2e;border-radius:1.5px"></div>
<div class="t" style="left:302.5px;top:234.70000000000002px;font-size:7px;line-height:7px;color:#e4e4e4;letter-spacing:-0.2px;-webkit-text-stroke:0.15px #e4e4e4">참나무통맑은이슬</div>
<div class="a" style="left:379.3px;top:231.8px;width:11.8px;height:11.6px;background:#fff;border:1px solid #2a2b2e;border-radius:1.5px"></div>
<div class="t" style="left:394.5px;top:234.70000000000002px;font-size:7px;line-height:7px;color:#e4e4e4;letter-spacing:-0.2px;-webkit-text-stroke:0.15px #e4e4e4">기타</div>
<div class="a" style="left:190px;top:255.5px;width:479px;height:67.5px;background:#2a2b2e;"></div>
<div class="a" style="left:191px;top:256.5px;width:477px;height:65.5px;background:#4a4b4f;"></div>
<div class="a" style="left:191px;top:256.5px;width:88px;height:65.5px;background:#3a3b3f;"></div>
<div class="a" style="left:279px;top:256.5px;width:1px;height:65.5px;background:#2a2b2e;"></div>
<div class="a" style="left:191px;top:277.5px;width:477px;height:1px;background:#2a2b2e;"></div>
<div class="a" style="left:191px;top:300px;width:477px;height:1px;background:#2a2b2e;"></div>
<div class="t" style="left:191px;top:262.8px;font-size:8px;line-height:8px;color:#eaeaea;width:88px;text-align:center;letter-spacing:-1px;-webkit-text-stroke:0.2px #eaeaea">업소규모</div>
<div class="t" style="left:191px;top:285.3px;font-size:8px;line-height:8px;color:#eaeaea;width:88px;text-align:center;letter-spacing:-1px;-webkit-text-stroke:0.2px #eaeaea">업종</div>
<div class="t" style="left:191px;top:307.4px;font-size:8.2px;line-height:8.2px;color:#eaeaea;width:88px;text-align:center;letter-spacing:-0.7px;-webkit-text-stroke:0.2px #eaeaea">FACT</div>
<div class="a" style="left:287.3px;top:260.09999999999997px;width:11.8px;height:11.6px;background:#fff;border:1px solid #2a2b2e;border-radius:1.5px"></div>
<div class="t" style="left:302.5px;top:263.0px;font-size:7px;line-height:7px;color:#e4e4e4;letter-spacing:-0.2px;-webkit-text-stroke:0.15px #e4e4e4">전체</div>
<div class="a" style="left:331.90000000000003px;top:260.09999999999997px;width:11.8px;height:11.6px;background:#fff;border:1px solid #2a2b2e;border-radius:1.5px"></div>
<div class="t" style="left:347.1px;top:263.0px;font-size:7px;line-height:7px;color:#e4e4e4;letter-spacing:-0.2px;-webkit-text-stroke:0.15px #e4e4e4">대형</div>
<div class="a" style="left:376.3px;top:260.09999999999997px;width:11.8px;height:11.6px;background:#fff;border:1px solid #2a2b2e;border-radius:1.5px"></div>
<div class="t" style="left:391.5px;top:263.0px;font-size:7px;line-height:7px;color:#e4e4e4;letter-spacing:-0.2px;-webkit-text-stroke:0.15px #e4e4e4">중형</div>
<div class="a" style="left:421.0px;top:260.09999999999997px;width:11.8px;height:11.6px;background:#fff;border:1px solid #2a2b2e;border-radius:1.5px"></div>
<div class="t" style="left:436.2px;top:263.0px;font-size:7px;line-height:7px;color:#e4e4e4;letter-spacing:-0.2px;-webkit-text-stroke:0.15px #e4e4e4">소형</div>
<div class="a" style="left:287.3px;top:282.7px;width:11.8px;height:11.6px;background:#fff;border:1px solid #2a2b2e;border-radius:1.5px"></div>
<div class="t" style="left:302.5px;top:285.6px;font-size:7px;line-height:7px;color:#e4e4e4;letter-spacing:-0.2px;-webkit-text-stroke:0.15px #e4e4e4">전체</div>
<div class="a" style="left:331.6px;top:282.7px;width:11.8px;height:11.6px;background:#fff;border:1px solid #2a2b2e;border-radius:1.5px"></div>
<div class="t" style="left:346.8px;top:285.6px;font-size:7px;line-height:7px;color:#e4e4e4;letter-spacing:-0.2px;-webkit-text-stroke:0.15px #e4e4e4">일반식당</div>
<div class="a" style="left:375.6px;top:282.7px;width:11.8px;height:11.6px;background:#fff;border:1px solid #2a2b2e;border-radius:1.5px"></div>
<div class="t" style="left:390.8px;top:285.6px;font-size:7px;line-height:7px;color:#e4e4e4;letter-spacing:-0.2px;-webkit-text-stroke:0.15px #e4e4e4">고깃집</div>
<div class="a" style="left:420.2px;top:282.7px;width:11.8px;height:11.6px;background:#fff;border:1px solid #2a2b2e;border-radius:1.5px"></div>
<div class="t" style="left:435.4px;top:285.6px;font-size:7px;line-height:7px;color:#e4e4e4;letter-spacing:-0.2px;-webkit-text-stroke:0.15px #e4e4e4">호프/포차</div>
<div class="a" style="left:472.2px;top:282.7px;width:11.8px;height:11.6px;background:#fff;border:1px solid #2a2b2e;border-radius:1.5px"></div>
<div class="t" style="left:487.4px;top:285.6px;font-size:7px;line-height:7px;color:#e4e4e4;letter-spacing:-0.2px;-webkit-text-stroke:0.15px #e4e4e4">세계음식</div>
<div class="a" style="left:520.6999999999999px;top:282.7px;width:11.8px;height:11.6px;background:#fff;border:1px solid #2a2b2e;border-radius:1.5px"></div>
<div class="t" style="left:535.9px;top:285.6px;font-size:7px;line-height:7px;color:#e4e4e4;letter-spacing:-0.2px;-webkit-text-stroke:0.15px #e4e4e4">해산물</div>
<div class="a" style="left:565.0px;top:282.7px;width:11.8px;height:11.6px;background:#fff;border:1px solid #2a2b2e;border-radius:1.5px"></div>
<div class="t" style="left:580.2px;top:285.6px;font-size:7px;line-height:7px;color:#e4e4e4;letter-spacing:-0.2px;-webkit-text-stroke:0.15px #e4e4e4">특수</div>
<div class="a" style="left:609.9px;top:282.7px;width:11.8px;height:11.6px;background:#fff;border:1px solid #2a2b2e;border-radius:1.5px"></div>
<div class="t" style="left:625.1px;top:285.6px;font-size:7px;line-height:7px;color:#e4e4e4;letter-spacing:-0.2px;-webkit-text-stroke:0.15px #e4e4e4">기타</div>
<div class="a" style="left:287.3px;top:305.2px;width:11.8px;height:11.6px;background:#fff;border:1px solid #2a2b2e;border-radius:1.5px"></div>
<div class="t" style="left:302.5px;top:308.1px;font-size:7px;line-height:7px;color:#e4e4e4;letter-spacing:-0.2px;-webkit-text-stroke:0.15px #e4e4e4">전체</div>
<div class="a" style="left:331.6px;top:305.2px;width:11.8px;height:11.6px;background:#fff;border:1px solid #2a2b2e;border-radius:1.5px"></div>
<div class="t" style="left:346.8px;top:308.1px;font-size:7px;line-height:7px;color:#e4e4e4;letter-spacing:-0.2px;-webkit-text-stroke:0.15px #e4e4e4">총CAPA</div>
<div class="a" style="left:375.6px;top:305.2px;width:11.8px;height:11.6px;background:#fff;border:1px solid #2a2b2e;border-radius:1.5px"></div>
<div class="t" style="left:390.8px;top:308.1px;font-size:7px;line-height:7px;color:#e4e4e4;letter-spacing:-0.2px;-webkit-text-stroke:0.15px #e4e4e4">판매량</div>
<div class="a" style="left:420.2px;top:305.2px;width:11.8px;height:11.6px;background:#fff;border:1px solid #2a2b2e;border-radius:1.5px"></div>
<div class="t" style="left:435.4px;top:308.1px;font-size:7px;line-height:7px;color:#e4e4e4;letter-spacing:-0.2px;-webkit-text-stroke:0.15px #e4e4e4">M/S</div>
<div class="a" style="left:465.0px;top:305.2px;width:11.8px;height:11.6px;background:#fff;border:1px solid #2a2b2e;border-radius:1.5px"></div>
<div class="t" style="left:480.2px;top:308.1px;font-size:7px;line-height:7px;color:#e4e4e4;letter-spacing:-0.2px;-webkit-text-stroke:0.15px #e4e4e4">총금액</div>
<div class="a" style="left:517.0px;top:305.2px;width:11.8px;height:11.6px;background:#fff;border:1px solid #2a2b2e;border-radius:1.5px"></div>
<div class="t" style="left:532.2px;top:308.1px;font-size:7px;line-height:7px;color:#e4e4e4;letter-spacing:-0.2px;-webkit-text-stroke:0.15px #e4e4e4">금액M/S</div>
<div class="a" style="left:565.0px;top:305.2px;width:11.8px;height:11.6px;background:#fff;border:1px solid #2a2b2e;border-radius:1.5px"></div>
<div class="t" style="left:580.2px;top:308.1px;font-size:7px;line-height:7px;color:#e4e4e4;letter-spacing:-0.2px;-webkit-text-stroke:0.15px #e4e4e4">총업소주</div>
<div class="a" style="left:609.9px;top:305.2px;width:11.8px;height:11.6px;background:#fff;border:1px solid #2a2b2e;border-radius:1.5px"></div>
<div class="t" style="left:625.1px;top:308.1px;font-size:7px;line-height:7px;color:#e4e4e4;letter-spacing:-0.2px;-webkit-text-stroke:0.15px #e4e4e4">발주율</div>
<svg class="a" style="left:195.8px;top:338px" width="6" height="4" viewBox="0 0 6 4"><path d="M0.8 0.9 L3 2.9 L5.2 0.9" fill="none" stroke="#eee" stroke-width="1.5"/></svg>
<div class="t" style="left:206.5px;top:335.6px;font-size:8.4px;line-height:8.4px;color:#eeeeee;letter-spacing:-0.5px;font-weight:bold;-webkit-text-stroke:0.25px #eee">다운로드</div>
<div class="t" style="left:241.8px;top:335.6px;font-size:8.4px;line-height:8.4px;color:#eeeeee;letter-spacing:-0.5px;font-weight:bold;-webkit-text-stroke:0.25px #eee">항목</div>
<div class="a" style="left:190px;top:350px;width:479px;height:35px;background:#2a2b2e;"></div>
<div class="a" style="left:191px;top:351px;width:477px;height:33px;background:#4a4b4f;"></div>
<div class="a" style="left:191px;top:375.6px;width:477px;height:8.4px;background:#5a5b5f;"></div>
<div class="t" style="left:190px;top:355.5px;width:28.69999999999999px;text-align:center;font-size:6.6px;line-height:8px;color:#e6e6e6;letter-spacing:-0.6px;-webkit-text-stroke:0.12px #e6e6e6">권역<br>상권명</div>
<div class="a" style="left:218.2px;top:351px;width:1px;height:24.600000000000023px;background:#35363a;"></div>
<div class="t" style="left:218.7px;top:355.5px;width:28.0px;text-align:center;font-size:6.6px;line-height:8px;color:#e6e6e6;letter-spacing:-0.6px;-webkit-text-stroke:0.12px #e6e6e6">지점<br>상권명</div>
<div class="a" style="left:246.2px;top:351px;width:1px;height:24.600000000000023px;background:#35363a;"></div>
<div class="t" style="left:246.7px;top:355.5px;width:29.0px;text-align:center;font-size:6.6px;line-height:8px;color:#e6e6e6;letter-spacing:-0.6px;-webkit-text-stroke:0.12px #e6e6e6">파트<br>상권명</div>
<div class="a" style="left:275.2px;top:351px;width:1px;height:24.600000000000023px;background:#35363a;"></div>
<div class="t" style="left:275.7px;top:359px;width:22.900000000000034px;text-align:center;font-size:6.6px;line-height:8px;color:#e6e6e6;letter-spacing:-0.6px;-webkit-text-stroke:0.12px #e6e6e6">상권명</div>
<div class="a" style="left:298.1px;top:351px;width:1px;height:24.600000000000023px;background:#35363a;"></div>
<div class="t" style="left:298.6px;top:359px;width:22.899999999999977px;text-align:center;font-size:6.6px;line-height:8px;color:#e6e6e6;letter-spacing:-0.6px;-webkit-text-stroke:0.12px #e6e6e6">부서</div>
<div class="a" style="left:321.0px;top:351px;width:1px;height:24.600000000000023px;background:#35363a;"></div>
<div class="t" style="left:321.5px;top:359px;width:22.399999999999977px;text-align:center;font-size:6.6px;line-height:8px;color:#e6e6e6;letter-spacing:-0.6px;-webkit-text-stroke:0.12px #e6e6e6">담당</div>
<div class="a" style="left:343.4px;top:351px;width:1px;height:24.600000000000023px;background:#35363a;"></div>
<div class="t" style="left:343.9px;top:359px;width:30.30000000000001px;text-align:center;font-size:6.6px;line-height:8px;color:#e6e6e6;letter-spacing:-0.6px;-webkit-text-stroke:0.12px #e6e6e6">우편번호</div>
<div class="a" style="left:373.7px;top:351px;width:1px;height:24.600000000000023px;background:#35363a;"></div>
<div class="t" style="left:374.2px;top:359px;width:27.5px;text-align:center;font-size:6.6px;line-height:8px;color:#e6e6e6;letter-spacing:-0.6px;-webkit-text-stroke:0.12px #e6e6e6">대로길</div>
<div class="a" style="left:401.2px;top:351px;width:1px;height:24.600000000000023px;background:#35363a;"></div>
<div class="t" style="left:401.7px;top:359px;width:21.80000000000001px;text-align:center;font-size:6.6px;line-height:8px;color:#e6e6e6;letter-spacing:-0.6px;-webkit-text-stroke:0.12px #e6e6e6">주종</div>
<div class="a" style="left:423.0px;top:351px;width:1px;height:24.600000000000023px;background:#35363a;"></div>
<div class="t" style="left:423.5px;top:359px;width:23.19999999999999px;text-align:center;font-size:6.6px;line-height:8px;color:#e6e6e6;letter-spacing:-0.6px;-webkit-text-stroke:0.12px #e6e6e6">분류</div>
<div class="a" style="left:446.2px;top:351px;width:1px;height:24.600000000000023px;background:#35363a;"></div>
<div class="t" style="left:446.7px;top:355.5px;width:36.900000000000034px;text-align:center;font-size:6.6px;line-height:8px;color:#e6e6e6;letter-spacing:-0.6px;-webkit-text-stroke:0.12px #e6e6e6">브랜드/<br>용기/용량</div>
<div class="a" style="left:483.1px;top:351px;width:1px;height:24.600000000000023px;background:#35363a;"></div>
<div class="t" style="left:483.6px;top:359px;width:35.0px;text-align:center;font-size:6.6px;line-height:8px;color:#e6e6e6;letter-spacing:-0.6px;-webkit-text-stroke:0.12px #e6e6e6">업소규모</div>
<div class="a" style="left:518.1px;top:351px;width:1px;height:24.600000000000023px;background:#35363a;"></div>
<div class="t" style="left:518.6px;top:359px;width:22.299999999999955px;text-align:center;font-size:6.6px;line-height:8px;color:#e6e6e6;letter-spacing:-0.6px;-webkit-text-stroke:0.12px #e6e6e6">업종</div>
<div class="a" style="left:540.4px;top:351px;width:1px;height:24.600000000000023px;background:#35363a;"></div>
<div class="t" style="left:540.9px;top:359px;width:16.800000000000068px;text-align:center;font-size:6.6px;line-height:8px;color:#e6e6e6;letter-spacing:-0.6px;-webkit-text-stroke:0.12px #e6e6e6">월</div>
<div class="a" style="left:557.2px;top:351px;width:1px;height:24.600000000000023px;background:#35363a;"></div>
<div class="t" style="left:557.7px;top:359px;width:21.699999999999932px;text-align:center;font-size:6.6px;line-height:8px;color:#e6e6e6;letter-spacing:-0.6px;-webkit-text-stroke:0.12px #e6e6e6"><span style="letter-spacing:-0.1px">M/S</span></div>
<div class="a" style="left:578.9px;top:351px;width:1px;height:24.600000000000023px;background:#35363a;"></div>
<div class="t" style="left:579.4px;top:355.5px;width:25.5px;text-align:center;font-size:6.6px;line-height:8px;color:#e6e6e6;letter-spacing:-0.6px;-webkit-text-stroke:0.12px #e6e6e6">총판매<br>금액</div>
<div class="a" style="left:604.4px;top:351px;width:1px;height:24.600000000000023px;background:#35363a;"></div>
<div class="t" style="left:604.9px;top:359px;width:30.800000000000068px;text-align:center;font-size:6.6px;line-height:8px;color:#e6e6e6;letter-spacing:-0.6px;-webkit-text-stroke:0.12px #e6e6e6">금액<span style="letter-spacing:-0.1px">M/S</span></div>
<div class="a" style="left:635.2px;top:351px;width:1px;height:24.600000000000023px;background:#35363a;"></div>
<div class="t" style="left:635.7px;top:359px;width:33.299999999999955px;text-align:center;font-size:6.6px;line-height:8px;color:#e6e6e6;letter-spacing:-0.6px;-webkit-text-stroke:0.12px #e6e6e6">발주율</div>
<div class="a" style="left:401px;top:395px;width:58.4px;height:18px;background:#3d9bf5;"></div>
<div class="t" style="left:401.3px;top:400.4px;font-size:7px;line-height:7px;color:#fff;width:58.4px;text-align:center;letter-spacing:-0.5px;font-weight:bold;-webkit-text-stroke:0.1px #fff">다운로드</div>
</body></html>
